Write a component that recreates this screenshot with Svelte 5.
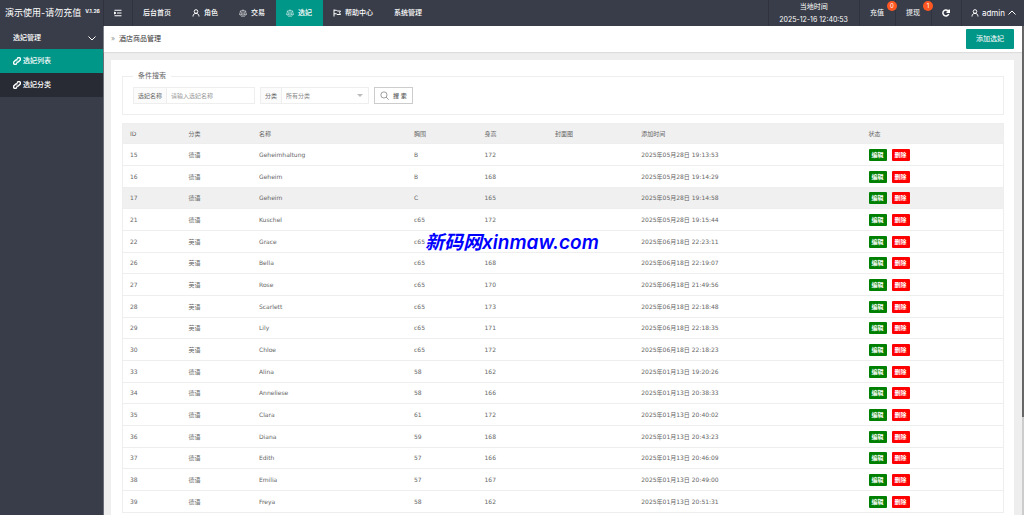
<script>
  const nav = [
    { label: '后台首页' },
    { label: '角色', icon: 'user' },
    { label: '交易', icon: 'scale' },
    { label: '选妃', icon: 'scale', active: true },
    { label: '帮助中心', icon: 'flag' },
    { label: '系统管理' },
  ];
  const counters = [
    { label: '充值', count: 0 },
    { label: '提现', count: 1 },
  ];
  const side = [
    { label: '选妃列表', active: true },
    { label: '选妃分类' },
  ];
  const columns = [
    { title: 'ID', width: 6.7 },
    { title: '分类', width: 8 },
    { title: '名称', width: 17.6 },
    { title: '胸围', width: 8 },
    { title: '身高', width: 8 },
    { title: '封面图', width: 9.8 },
    { title: '添加时间', width: 25.8 },
    { title: '状态', width: 16.1 },
  ];
  const rows = [
    [15, '德语', 'Geheimhaltung', 'B', 172, '2025年05月28日 19:13:53'],
    [16, '德语', 'Geheim', 'B', 168, '2025年05月28日 19:14:29'],
    [17, '德语', 'Geheim', 'C', 165, '2025年05月28日 19:14:58'],
    [21, '德语', 'Kuschel', 'c65', 172, '2025年05月28日 19:15:44'],
    [22, '英语', 'Grace', 'c65', '', '2025年06月18日 22:23:11'],
    [26, '英语', 'Bella', 'c65', 168, '2025年06月18日 22:19:07'],
    [27, '英语', 'Rose', 'c65', 170, '2025年06月18日 21:49:56'],
    [28, '英语', 'Scarlett', 'c65', 173, '2025年06月18日 22:18:48'],
    [29, '英语', 'Lily', 'c65', 171, '2025年06月18日 22:18:35'],
    [30, '英语', 'Chloe', 'c65', 172, '2025年06月18日 22:18:23'],
    [33, '德语', 'Alina', '58', 162, '2025年01月13日 19:20:26'],
    [34, '德语', 'Anneliese', '58', 166, '2025年01月13日 20:38:33'],
    [35, '德语', 'Clara', '61', 172, '2025年01月13日 20:40:02'],
    [36, '德语', 'Diana', '59', 168, '2025年01月13日 20:43:23'],
    [37, '德语', 'Edith', '57', 166, '2025年01月13日 20:46:09'],
    [38, '德语', 'Emilia', '57', 167, '2025年01月13日 20:49:00'],
    [39, '德语', 'Freya', '58', 162, '2025年01月13日 20:51:31'],
  ];
  let keyword = $state('');
  let category = $state('');
  let current = $state(17);
</script>

{#snippet icon(name)}
  <svg class="icon" viewBox="0 0 16 16" aria-hidden="true">
    {#if name === 'user'}
      <circle cx="8" cy="5" r="3.6" />
      <path d="M2 15c0-4 2.4-6.2 6-6.2s6 2.2 6 6.2" />
    {:else if name === 'scale'}
      <path class="fine" d="M8 1v13M1.500 4.500l6.500-2 6.500 2M4 14.500h8M3.500 4.500.8 10.500h5.400zM12.500 4.500 9.800 10.500h5.400zM.8 11q2.700 3 5.400 0M9.800 11q2.700 3 5.400 0" />
    {:else if name === 'flag'}
      <path d="M2 1v14M2 2.500h5l1.500 1.500H15l-2 3.500 2 3.500H8l-1-1.500H2" />
    {:else if name === 'menu'}
      <path d="M1 2.500h14M6 8h9M1 13.500h14M1 6v4l3-2z" />
    {:else if name === 'link'}
      <path class="bold" d="M7 9.500a3 3 0 0 0 4 0l3-3a3 3 0 0 0-4.500-4.500L8 3.500M9 6.500a3 3 0 0 0-4 0l-3 3A3 3 0 0 0 6.500 14L8 12.500" />
    {:else if name === 'refresh'}
      <path class="bold" d="M13.500 10A6 6 0 1 1 12 3.500L14 5.500M14.500 1v5.500H9" />
    {:else if name === 'search'}
      <circle cx="7" cy="7" r="5.500" /><path d="m11 11 4.500 4.500" />
    {:else if name === 'down'}
      <path d="m1 5 7 7 7-7" />
    {:else if name === 'up'}
      <path d="m1 11 7-7 7 7" />
    {/if}
  </svg>
{/snippet}

<div class="layout">
  <header class="topbar">
    <a class="logo" href="#home">演示使用-请勿充值 <sup>V.1.26</sup></a>
    <button class="fold" aria-label="菜单">{@render icon('menu')}</button>
    <nav>
      {#each nav as item}
        <a href="#{item.label}" class:active={item.active}>
          {#if item.icon}{@render icon(item.icon)}{/if}{item.label}
        </a>
      {/each}
    </nav>
    <div class="tools">
      <div class="clock"><span>当地时间</span><span>2025-12-16 12:40:53</span></div>
      {#each counters as c}
        <a href="#{c.label}">{c.label}<span class="badge">{c.count}</span></a>
      {/each}
      <button aria-label="刷新">{@render icon('refresh')}</button>
      <button class="account">{@render icon('user')}<span>admin</span>{@render icon('up')}</button>
    </div>
  </header>

  <div class="body">
    <aside>
      <button class="group">选妃管理 {@render icon('down')}</button>
      {#each side as item}
        <a href="#{item.label}" class:active={item.active}>{@render icon('link')}{item.label}</a>
      {/each}
    </aside>

    <main>
      <div class="crumb">
        <h1><span>»</span>酒店商品管理</h1>
        <button class="add">添加选妃</button>
      </div>
      <section class="card">
        <fieldset>
          <legend>条件搜索</legend>
          <div class="field">
            <label for="keyword">选妃名称</label>
            <input id="keyword" bind:value={keyword} placeholder="请输入选妃名称" />
          </div>
          <div class="field">
            <label for="category">分类</label>
            <div class="select">
              <select id="category" bind:value={category}>
                <option value="">所有分类</option>
                <option>德语</option>
                <option>英语</option>
              </select>
            </div>
          </div>
          <button class="search">{@render icon('search')}搜 索</button>
        </fieldset>

        <table>
          <colgroup>
            {#each columns as col}<col style="width: {col.width}%" />{/each}
          </colgroup>
          <thead>
            <tr>{#each columns as col}<th>{col.title}</th>{/each}</tr>
          </thead>
          <tbody>
            {#each rows as [id, type, name, bust, height, time]}
              <tr class:current={id === current} onmouseenter={() => (current = id)}>
                <td>{id}</td>
                <td>{type}</td>
                <td>{name}</td>
                <td>{bust}</td>
                <td>{height}</td>
                <td></td>
                <td>{time}</td>
                <td><div class="ops"><button class="edit">编辑</button><button class="del">删除</button></div></td>
              </tr>
            {/each}
          </tbody>
        </table>
      </section>
    </main>
  </div>
  <div class="scroll"><i></i></div>
  <div class="mark">新码网xinmaw.com</div>
</div>

<style>
  :global(body) { margin: 0; }
  .layout { height: 100vh; display: flex; flex-direction: column; position: relative;
    overflow: hidden; background: #eee; color: #666;
    font: 6px/10px Inter, "Noto Sans CJK SC", sans-serif; }
  .layout * { box-sizing: border-box; }
  button, input, select { font: inherit; color: inherit; background: none;
    border: 0; margin: 0; padding: 0; }
  a { color: inherit; text-decoration: none; }
  .icon { width: 8px; height: 8px; flex: none; fill: none; stroke: currentColor;
    stroke-width: 2; }
  .bold { stroke-width: 3; }
  .fine { stroke-width: 1; }

  .topbar { flex: none; display: flex; height: 26px; background: #393d49;
    color: #fff; font-size: 7px; }
  .logo { width: 104px; padding-left: 5px; display: flex; align-items: center; gap: 4px;
    font-size: 9px; white-space: nowrap; border-right: 1px solid #30333d; }
  .logo sup { font-size: 5px; line-height: 6px; font-weight: 700; align-self: flex-start;
    margin-top: 8px; }
  .fold { width: 29px; display: flex; align-items: center; justify-content: center;
    border-right: 1px solid #30333d; }
  nav { display: flex; font-weight: 500; }
  nav a { display: flex; align-items: center; gap: 4px; padding: 0 11px 0 10px; }
  .active { background: #009688; }
  .tools { margin-left: auto; display: flex; }
  .tools > * { display: flex; align-items: center; padding: 0 11px 0 10px;
    border-left: 1px solid #30333d; position: relative; }
  .clock { flex-direction: column; justify-content: space-around; }
  .badge { position: absolute; top: 1px; right: -2px; width: 10px; height: 10px;
    border-radius: 50%; background: #ff5722; font-size: 6px; text-align: center; z-index: 1; }
  .tools .account { gap: 3px; padding: 0 8px 0 9px; font-size: 8px; }

  .body { flex: 1; min-height: 0; display: flex; }
  aside { flex: none; width: 104px; background: #393d49; color: #fff;
    font-size: 7px; font-weight: 500; border-right: 1px solid #6b6e77; }
  .group { width: 100%; height: 23px; padding: 0 7px 0 13px; display: flex;
    align-items: center; justify-content: space-between; }
  aside a { display: flex; align-items: center; gap: 2px; height: 24px; padding-left: 13px;
    background: #282b33; }
  aside a.active { background: #009688; }

  main { flex: 1; min-width: 0; display: flex; flex-direction: column; }
  .crumb { flex: none; height: 26px; padding: 0 10px 0 7px; display: flex; align-items: center;
    justify-content: space-between; background: #fff; color: #333;
    box-shadow: 0 1px 1px #ddd; }
  h1 { display: flex; gap: 4px; margin: 0; font-size: 7px; font-weight: 400; }
  h1 span { color: #999; }
  .add { height: 20px; padding: 0 10px; background: #009688; color: #fff; font-size: 7px;
    border-radius: 1px; }
  .card { flex: 1; min-height: 0; margin: 8px 10px 0 7px; padding: 11px 10px 0 11px;
    background: #fff; overflow: hidden; }
  fieldset { display: flex; gap: 5px; margin: 0 0 8px; padding: 6px 10px 10px;
    border: 1px solid #eee; }
  legend { padding: 0 5px; font-size: 7px; }
  .field { display: flex; height: 17px; border: 1px solid #eee; }
  .field label { display: flex; align-items: center; padding: 0 4px; background: #fbfbfb;
    border-right: 1px solid #eee; }
  input { width: 87px; padding: 0 4px; }
  input::placeholder { color: #999; opacity: 1; }
  .select { display: flex; width: 86px; position: relative; color: #888; }
  select { width: 100%; padding: 0 4px; appearance: none; }
  .select::after { content: ''; position: absolute; right: 5px; top: 6px;
    border: 3px solid transparent; border-top-color: #bbb; pointer-events: none; }
  .search { display: flex; align-items: center; gap: 4px; height: 17px; padding: 0 5px;
    border: 1px solid #ccc; font-weight: 500; color: #555; }
  .search .icon { width: 9px; height: 9px; stroke-width: 1; }

  table { width: 100%; table-layout: fixed; border-collapse: collapse;
    border: 1px solid #eee; font-family: "DejaVu Sans", "Noto Sans CJK SC", sans-serif; }
  tr { height: 22px; border-bottom: 1px solid #eee; }
  thead tr { height: 20px; }
  tbody tr:nth-child(3n) { height: 21px; }
  th, td { padding: 0 7px; text-align: left; font-weight: 400; white-space: nowrap; }
  thead tr, .current { background: #f0f0f0; }
  .ops { display: flex; gap: 5px; }
  .ops button { width: 18px; height: 12px; border-radius: 1px; color: #fff;
    font-weight: 700; }
  .edit { background: green; }
  .del { background: red; }

  .scroll { position: absolute; top: 26px; right: 0; bottom: 0; width: 2px;
    background: #ccc; }
  .scroll i { display: block; height: 80%; background: #666; }
  .mark { position: absolute; left: 425px; top: 230px; color: #00f; white-space: nowrap;
    font: italic 600 19px/25px Inter, "Noto Sans CJK SC", sans-serif; }
</style>
